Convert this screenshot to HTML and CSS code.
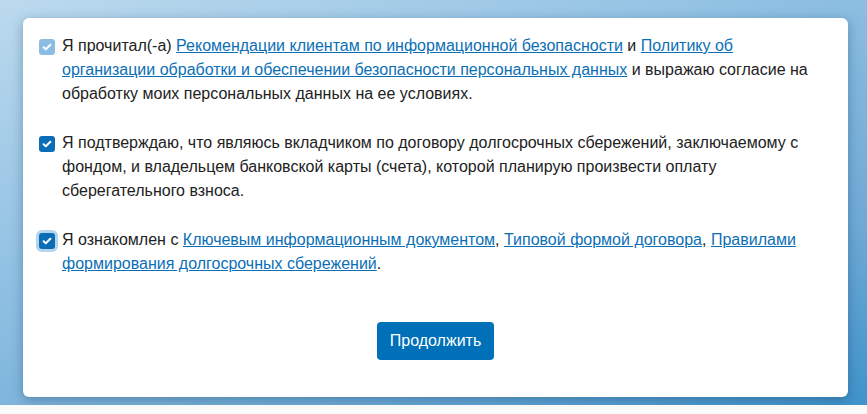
FILE: index.html
```html
<!DOCTYPE html>
<html lang="ru">
<head>
  <meta charset="UTF-8" />
  <meta name="viewport" content="width=device-width, initial-scale=1.0" />
  <title>Согласие</title>
  <link rel="stylesheet" href="styles.css">
</head>
<body>
  <div class="page">
    <div class="card">
      <label class="agree">
        <span class="box box-muted">
          <svg viewBox="0 0 16 16" width="16" height="16"><path d="M4.6 8.2l2.2 2.1 4.6-4.6" fill="none" stroke="#fff" stroke-width="2" stroke-linecap="round" stroke-linejoin="round"/></svg>
        </span>
        <span class="agree-text">Я прочитал(-а) <a href="#">Рекомендации клиентам по информационной безопасности</a> и <a href="#">Политику об организации обработки и обеспечении безопасности персональных данных</a> и выражаю согласие на обработку моих персональных данных на ее условиях.</span>
      </label>

      <label class="agree">
        <span class="box">
          <svg viewBox="0 0 16 16" width="16" height="16"><path d="M4.6 8.2l2.2 2.1 4.6-4.6" fill="none" stroke="#fff" stroke-width="2" stroke-linecap="round" stroke-linejoin="round"/></svg>
        </span>
        <span class="agree-text">Я подтверждаю, что являюсь вкладчиком по договору долгосрочных сбережений, заключаемому с фондом, и владельцем банковской карты (счета), которой планирую произвести оплату сберегательного взноса.</span>
      </label>

      <label class="agree">
        <span class="box box-focus">
          <svg viewBox="0 0 16 16" width="16" height="16"><path d="M4.6 8.2l2.2 2.1 4.6-4.6" fill="none" stroke="#fff" stroke-width="2" stroke-linecap="round" stroke-linejoin="round"/></svg>
        </span>
        <span class="agree-text">Я ознакомлен с <a href="#">Ключевым информационным документом</a>, <a href="#">Типовой формой договора</a>, <a href="#">Правилами формирования долгосрочных сбережений</a>.</span>
      </label>

      <div class="actions">
        <button class="btn">Продолжить</button>
      </div>
    </div>
  </div>
</body>
</html>
```

FILE: styles.css
```css
html {
  background: #fafafa;
}

body {
  margin: 0;
  font-family: "Liberation Sans", Arial, sans-serif;
  color: #222;
}

.page {
  height: 405px;
  box-sizing: border-box;
  padding: 18px 19px 0 23px;
  background: linear-gradient(160deg, #bcdaee 0%, #8fc0e2 40%, #6eaad6 75%, #3f93cb 100%);
}

.card {
  background: #fff;
  border-radius: 6px;
  padding: 16px 36px 37px 16px;
  box-shadow: 0 3px 12px rgba(10, 50, 90, 0.35);
}

.agree {
  display: flex;
  align-items: flex-start;
  margin-bottom: 25px;
  font-size: 16px;
  line-height: 24px;
  cursor: pointer;
}

.box {
  flex: none;
  width: 16px;
  height: 16px;
  margin-top: 5px;
  margin-right: 7px;
  border-radius: 3px;
  background: #0a6db5;
  display: flex;
}

.box-muted {
  background: #8bbde2;
}

.box-focus {
  box-shadow: 0 0 0 3px #b5d5ee;
}

.agree-text a {
  color: #0b6fb6;
  text-decoration: underline;
}

.actions {
  display: flex;
  justify-content: center;
  padding-top: 21px;
  padding-left: 20px;
}

.btn {
  background: #0070b8;
  color: #fff;
  border: none;
  border-radius: 4px;
  font-family: "Liberation Sans", Arial, sans-serif;
  font-size: 16px;
  width: 117px;
  height: 38px;
  cursor: pointer;
}
```
